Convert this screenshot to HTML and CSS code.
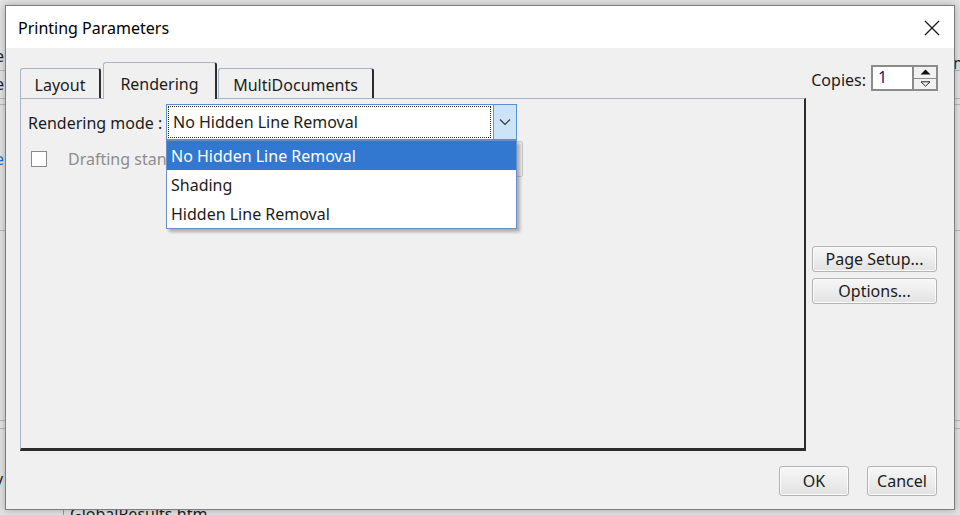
FILE: index.html
```html
<!DOCTYPE html>
<html lang="en">
<head>
<meta charset="utf-8">
<title>Printing Parameters</title>
<link rel="stylesheet" href="styles.css">
</head>
<body>
<div class="desktop">
  <div class="bg-app">
    <div class="bg-line l1"></div>
    <div class="bg-line l2"></div>
    <div class="bg-line l3"></div>
    <div class="bg-line l4"></div>
    <div class="bg-line l5"></div>
    <div class="bg-line l6"></div>
    <span class="frag fa">e</span>
    <span class="frag fb">e</span>
    <span class="frag fc">e</span>
    <span class="frag fd">y</span>
    <span class="frag fe">n</span>
    <div class="bg-vline"></div>
    <span class="frag ff">GlobalResults.htm</span>
  </div>

  <div class="dialog">
    <div class="titlebar">
      <span class="title">Printing Parameters</span>
      <span class="close">
        <svg width="16" height="16" viewBox="0 0 16 16"><path d="M1 1 L15 15 M15 1 L1 15" stroke="#1a1a1a" stroke-width="1.3" fill="none"/></svg>
      </span>
    </div>
    <div class="body">
      <div class="main">
        <div class="left">
          <div class="tabs">
            <div class="tab tab-layout">Layout</div>
            <div class="tab tab-sel">Rendering</div>
            <div class="tab tab-multi">MultiDocuments</div>
          </div>
          <div class="panel">
            <div class="row row-mode">
              <span class="label">Rendering mode :</span>
              <div class="combo">
                <div class="combo-text"><span class="focus">No Hidden Line Removal</span></div>
                <div class="combo-btn">
                  <svg width="12" height="8" viewBox="0 0 12 8"><path d="M1 1.5 L6 6.5 L11 1.5" stroke="#3a3a3a" stroke-width="1.2" fill="none"/></svg>
                </div>
                <ul class="dropdown">
                  <li class="item item-sel">No Hidden Line Removal</li>
                  <li class="item">Shading</li>
                  <li class="item">Hidden Line Removal</li>
                </ul>
              </div>
            </div>
            <div class="row row-draft">
              <span class="checkbox"></span>
              <span class="label label-dis">Drafting standard :</span>
              <div class="dis-box"></div>
            </div>
          </div>
        </div>
        <div class="right">
          <div class="copies">
            <span class="label">Copies:</span>
            <div class="spin">
              <div class="spin-input">1</div>
              <div class="spin-btns">
                <div class="spin-up">
                  <svg width="11" height="6" viewBox="0 0 11 6"><path d="M0.5 5.5 L5.5 0.5 L10.5 5.5 Z" fill="#111"/></svg>
                </div>
                <div class="spin-down">
                  <svg width="11" height="6" viewBox="0 0 11 6"><path d="M1 0.8 L10 0.8 L5.5 5.2 Z" fill="none" stroke="#222" stroke-width="1"/></svg>
                </div>
              </div>
            </div>
          </div>
          <button class="btn btn-page">Page Setup...</button>
          <button class="btn btn-opt">Options...</button>
        </div>
      </div>
      <div class="footer">
        <button class="btn btn-foot">OK</button>
        <button class="btn btn-foot">Cancel</button>
      </div>
    </div>
  </div>
</div>
</body>
</html>
```

FILE: styles.css
```css
html, body {
  margin: 0;
  padding: 0;
}
body {
  width: 960px;
  height: 515px;
  overflow: hidden;
  background: #dcdcdc;
  font-family: "Noto Sans", "Open Sans", sans-serif;
  font-size: 16px;
  color: #1c1c1c;
}
.desktop {
  position: relative;
  width: 960px;
  height: 515px;
}

/* background application fragments */
.bg-app {
  position: absolute;
  inset: 0;
  background: #e4e4e4;
}
.bg-line {
  position: absolute;
  left: 0;
  width: 960px;
  height: 1px;
  background: #b9b9b9;
}
.l1 { top: 70px; }
.l2 { top: 98px; }
.l3 { top: 104px; }
.l4 { top: 230px; }
.l5 { top: 420px; }
.l6 { top: 428px; }
.bg-vline {
  position: absolute;
  left: 63px;
  top: 505px;
  width: 1px;
  height: 10px;
  background: #9a9a9a;
}
.frag {
  position: absolute;
  font-size: 16px;
  line-height: 18px;
  color: #222;
}
.fa { left: -5px; top: 47px; }
.fb { left: -5px; top: 75px; }
.fc { left: -5px; top: 150px; color: #2a6cc4; }
.fd { left: -5px; top: 470px; }
.fe { left: 953px; top: 54px; }
.ff { left: 70px; top: 505px; }

/* dialog */
.dialog {
  position: absolute;
  left: 5px;
  top: 5px;
  width: 950px;
  height: 505px;
  box-sizing: border-box;
  border: 1px solid #7d7d7d;
  box-shadow: 0 0 8px rgba(0, 0, 0, 0.28);
  background: #f0f0f0;
  display: flex;
  flex-direction: column;
}
.titlebar {
  height: 42px;
  flex: none;
  background: #ffffff;
  display: flex;
  align-items: center;
  justify-content: space-between;
  padding: 0 14px 0 12px;
}
.title {
  color: #000;
  font-size: 16px;
  line-height: 20px;
  margin-top: 1px;
}
.close {
  display: flex;
  width: 16px;
  height: 16px;
  margin-top: 1px;
}

.body {
  flex: 1;
  display: flex;
  flex-direction: column;
  padding: 14px 16px 13px 14px;
}
.main {
  display: flex;
  gap: 6px;
  height: 389px;
}
.left {
  width: 786px;
  display: flex;
  flex-direction: column;
}
.tabs {
  height: 36px;
  display: flex;
  align-items: flex-end;
  position: relative;
  z-index: 2;
}
.tab {
  box-sizing: border-box;
  height: 30px;
  border-left: 1px solid #a9b5c6;
  border-top: 1px solid #a9b5c6;
  border-right: 2px solid #2c2c2c;
  border-radius: 3px 3px 0 0;
  background: #f0f0f0;
  display: flex;
  align-items: center;
  justify-content: center;
  padding-top: 3px;
  line-height: 20px;
}
.tab-layout { width: 81px; }
.tab-sel {
  width: 114px;
  height: 37px;
  margin-left: 2px;
  margin-bottom: -1px;
  padding-top: 5px;
}
.tab-multi {
  width: 156px;
  margin-left: 1px;
}
.panel {
  flex: 1;
  box-sizing: border-box;
  border-left: 1px solid #a9b5c6;
  border-top: 1px solid #a9b5c6;
  border-right: 2px solid #2c2c2c;
  border-bottom: 3px solid #2c2c2c;
  padding: 5px 0 0 7px;
  position: relative;
  z-index: 1;
}
.row {
  display: flex;
  align-items: center;
}
.label {
  line-height: 20px;
  white-space: nowrap;
}
.row-mode .label {
  width: 138px;
  flex: none;
  padding-top: 1px;
}
.combo {
  position: relative;
  z-index: 3;
  width: 351px;
  height: 36px;
  box-sizing: border-box;
  border: 1px solid #5a8fd3;
  background: #fff;
  display: flex;
}
.combo-text {
  flex: 1;
  padding: 1px 2px 1px 1px;
  display: flex;
}
.focus {
  flex: 1;
  border: 1px dotted #2a2a2a;
  display: flex;
  align-items: center;
  padding-left: 4px;
  line-height: 20px;
}
.combo-btn {
  width: 23px;
  box-sizing: border-box;
  background: #cce4f7;
  border-left: 1px solid #569de5;
  display: flex;
  align-items: center;
  justify-content: center;
}
.dropdown {
  position: absolute;
  left: -1px;
  top: 35px;
  width: 351px;
  margin: 0;
  padding: 0;
  list-style: none;
  box-sizing: border-box;
  border: 1px solid #6a8fc6;
  background: #fff;
  box-shadow: 3px 3px 3px rgba(0, 0, 0, 0.28);
}
.item {
  height: 29px;
  display: flex;
  align-items: center;
  padding-left: 4px;
  line-height: 20px;
}
.item-sel {
  background: #3277d0;
  color: #fff;
}
.row-draft {
  width: 495px;
  height: 36px;
  margin-top: 1px;
}
.checkbox {
  width: 16px;
  height: 16px;
  box-sizing: border-box;
  border: 1px solid #8a8a8a;
  background: #fff;
  margin-left: 3px;
  flex: none;
}
.label-dis {
  color: #8d8d8d;
  margin-left: 21px;
  width: 98px;
  overflow: hidden;
  flex: none;
}
.dis-box {
  margin-left: auto;
  width: 200px;
  height: 36px;
  box-sizing: border-box;
  border: 1px solid #c9c9c9;
  border-radius: 2px;
  background: #ececec;
}

.right {
  width: 126px;
  display: flex;
  flex-direction: column;
  align-items: flex-end;
}
.copies {
  display: flex;
  align-items: center;
  margin-top: 3px;
}
.copies .label {
  margin-right: 5px;
  padding-top: 4px;
}
.spin {
  display: flex;
  height: 26px;
}
.spin-input {
  width: 41px;
  box-sizing: border-box;
  border: 2px solid #8b8b8b;
  border-right: none;
  background: #fff;
  padding-left: 5px;
  line-height: 20px;
  color: #24195a;
}
.spin-btns {
  width: 26px;
  box-sizing: border-box;
  border: 2px solid #8b8b8b;
  display: flex;
  flex-direction: column;
  background: #8b8b8b;
  gap: 1px;
}
.spin-up, .spin-down {
  flex: 1;
  background: #f1f1f1;
  display: flex;
  align-items: center;
  justify-content: center;
}
.btn {
  font-family: "Noto Sans", "Open Sans", sans-serif;
  font-size: 16px;
  color: #1c1c1c;
  box-sizing: border-box;
  border: 1px solid #b3b3b3;
  border-radius: 3px;
  background: linear-gradient(#f7f7f7, #e2e2e2);
  box-shadow: inset 0 0 0 1px #fbfbfb;
  padding: 0;
  line-height: 20px;
}
.btn-page {
  width: 125px;
  height: 26px;
  margin-top: 155px;
  margin-right: 1px;
}
.btn-opt {
  width: 125px;
  height: 26px;
  margin-top: 6px;
  margin-right: 1px;
}
.footer {
  display: flex;
  justify-content: flex-end;
  gap: 18px;
  margin-top: 15px;
  padding-right: 1px;
}
.btn-foot {
  width: 70px;
  height: 30px;
}
```
